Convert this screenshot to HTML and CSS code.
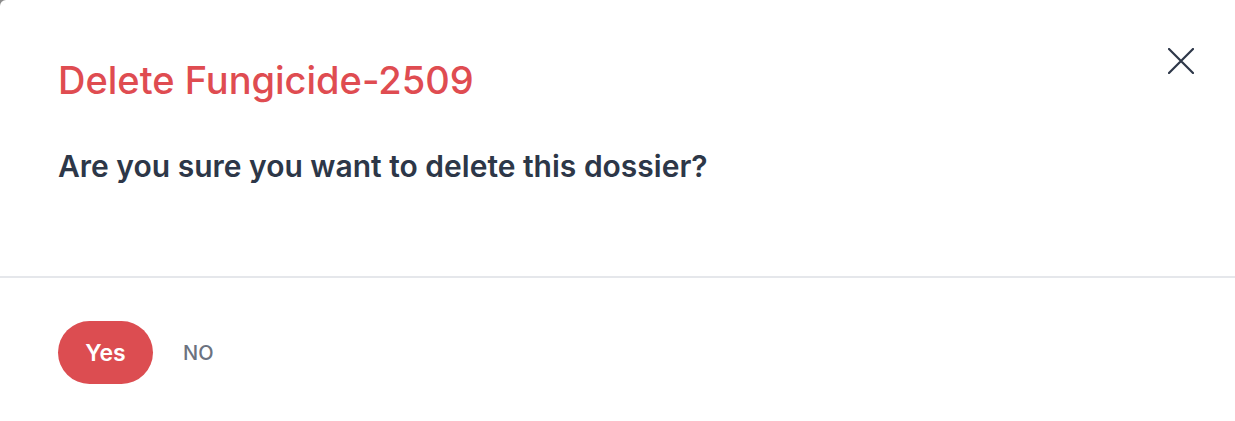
FILE: index.html
```html
<!DOCTYPE html>
<html lang="en">
<head>
    <meta charset="UTF-8">
    <meta name="viewport" content="width=device-width, initial-scale=1.0">
    <title>Delete dossier</title>
    <link rel="stylesheet" href="styles.css">
</head>
<body>

    <div class="modal">
        <div class="modal-head">
            <h1 class="modal-title">Delete Fungicide-2509</h1>
            <button class="close-btn" aria-label="Close">
                <svg width="26" height="26" viewBox="0 0 26 26" fill="none" stroke="#2d3748" stroke-width="2.2" stroke-linecap="round">
                    <path d="M1 1L25 25M25 1L1 25"/>
                </svg>
            </button>
        </div>
        <p class="modal-text">Are you sure you want to delete this dossier?</p>
        <div class="modal-foot">
            <button class="yes-btn">Yes</button>
            <button class="no-btn">NO</button>
        </div>
    </div>

</body>
</html>
```

FILE: styles.css
```css
html {
    background-color: #8c8c8c;
}
body {
    font-family: Inter, "Noto Sans", sans-serif;
    margin: 0;
    height: 421px;
    overflow: hidden;
}
.modal {
    background: white;
    height: 100%;
    border-top-left-radius: 6px;
}
.modal-head {
    display: flex;
    justify-content: space-between;
    align-items: flex-start;
    padding: 48px 41px 0 58px;
}
.modal-title {
    margin: 9px 0 0;
    font-size: 38px;
    font-weight: 500;
    color: #df4c51;
    line-height: 46px;
}
.close-btn {
    background: none;
    border: none;
    padding: 0;
    cursor: pointer;
    width: 26px;
    height: 26px;
}
.modal-text {
    margin: 45px 0 0;
    padding: 0 0 92px 58px;
    font-size: 30px;
    font-weight: 600;
    color: #2d3748;
    line-height: 36px;
    border-bottom: 2px solid #e5e7eb;
}
.modal-foot {
    display: flex;
    align-items: center;
    gap: 30px;
    padding: 43px 58px;
}
.yes-btn {
    font-family: inherit;
    background-color: #dc4d51;
    color: white;
    border: none;
    border-radius: 32px;
    width: 95px;
    height: 63px;
    font-size: 23px;
    font-weight: 600;
    cursor: pointer;
}
.no-btn {
    font-family: inherit;
    background: none;
    border: none;
    padding: 0;
    color: #6b7280;
    font-size: 20px;
    font-weight: 500;
    cursor: pointer;
}
```
